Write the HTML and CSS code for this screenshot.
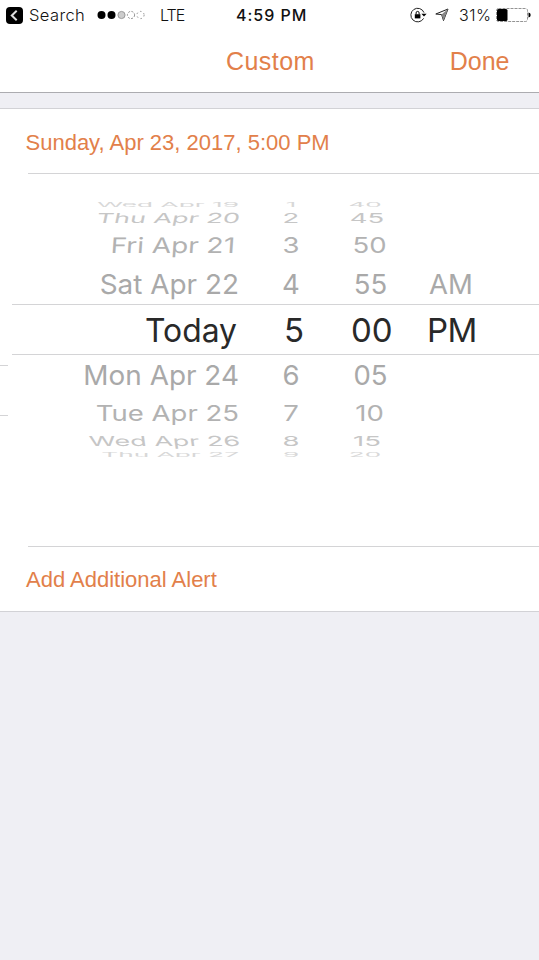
FILE: index.html
```html
<!DOCTYPE html>
<html lang="en">
<head>
<meta charset="utf-8">
<title>Custom Alert</title>
<link rel="stylesheet" href="styles.css">
</head>
<body>
<header class="top">
  <div class="status">
    <svg class="back" width="17" height="17" viewBox="0 0 17 17"><rect width="17" height="17" rx="4"/><path d="M10.7 3.8 5.8 8.5l4.9 4.7" fill="none" stroke="#ddd" stroke-width="2"/></svg>
    <span class="search">Search</span>
    <svg class="signal" width="48" height="10" viewBox="0 0 48 10"><circle cx="4.5" cy="5" r="4"/><circle cx="14.5" cy="5" r="4"/><circle cx="24.5" cy="5" r="3.6" fill="#ccc" stroke="#888" stroke-width=".8"/><g fill="none" stroke="#777" stroke-width=".8" stroke-dasharray="2 1.4"><circle cx="34" cy="5" r="3.6"/><circle cx="43.5" cy="5" r="3.6" stroke-dasharray="1.5 2.5"/></g></svg>
    <span class="carrier">LTE</span>
    <span class="clock">4:59 PM</span>
    <svg class="lock" width="17" height="16" viewBox="0 0 17 16"><path d="M13.6 11.4A6.8 6.8 0 1 1 14 5.6" fill="none" stroke="#222" stroke-width="1"/><path d="M11.4 6.8h5.2L14 9.6z"/><rect x="4.8" y="7.2" width="5.6" height="4.2"/><path d="M6.1 7.2V5.9a1.5 1.5 0 0 1 3 0v1.3" fill="none" stroke="#000" stroke-width="1"/></svg>
    <svg class="arrow" width="14" height="14" viewBox="0 0 14 14"><path d="M13 1 .8 6l5.8.6 1.9 6z" fill="none" stroke="#222" stroke-width="1"/><path d="M13 1 6.6 6.6l1.9 6z" fill="#888"/></svg>
    <span class="percent">31%</span>
    <svg class="battery" width="36" height="14" viewBox="0 0 36 14"><rect x=".5" y=".5" width="31" height="13" rx="2" fill="none" stroke="#777" stroke-width=".8" stroke-dasharray="3 1"/><rect x="1" y="1" width="10.5" height="12" rx="1.5"/><path d="M32.5 4.5q2.2.3 2.2 2.5t-2.2 2.5z"/></svg>
  </div>
  <nav class="nav"><h1>Custom</h1><a>Done</a></nav>
</header>
<main class="panel">
  <div class="date">Sunday, Apr 23, 2017, 5:00 PM</div>
  <div class="picker">
    <div class="wheel">
      <div class="row edge first"><span>Wed Apr 19</span><span>1</span><span>40</span></div>
      <div class="row far up"><span>Thu Apr 20</span><span>2</span><span>45</span></div>
      <div class="row mid up"><span>Fri Apr 21</span><span>3</span><span>50</span></div>
      <div class="row near above"><span>Sat Apr 22</span><span>4</span><span>55</span><span>AM</span></div>
      <div class="row current"><span>Today</span><span>5</span><span>00</span><span>PM</span></div>
      <div class="row near below"><span>Mon Apr 24</span><span>6</span><span>05</span></div>
      <div class="row mid down"><span>Tue Apr 25</span><span>7</span><span>10</span></div>
      <div class="row far down"><span>Wed Apr 26</span><span>8</span><span>15</span></div>
      <div class="row edge last"><span>Thu Apr 27</span><span>9</span><span>20</span></div>
    </div>
  </div>
  <div class="add">Add Additional Alert</div>
</main>
</body>
</html>
```
FILE: styles.css
```css
* { box-sizing: border-box; }
body { margin: 0; height: 960px; overflow: hidden; background: #efeff4; font-family: "Liberation Sans", Arial, sans-serif; color: #e2804a; }
.top { height: 93px; background: #fff; border-bottom: 1px solid #acacb0; }
.status { display: flex; align-items: center; height: 30px; padding-left: 6px; color: #111; font: 16.5px/30px Inter, sans-serif; white-space: nowrap; }
.status svg { flex: none; display: block; }
.search { width: 62px; margin-left: 6px; font-weight: 300; letter-spacing: .4px; }
.signal { margin-left: 6px; }
.carrier { width: 62px; margin-left: 15px; font-weight: 300; font-size: 16px; letter-spacing: -.9px; }
.clock { width: 160px; margin-left: 14px; font-weight: 450; font-size: 16px; letter-spacing: 1px; }
.lock { margin-left: 14px; }
.arrow { margin-left: 8px; }
.percent { width: 33px; margin-left: 10px; font-weight: 300; font-size: 16px; letter-spacing: .5px; }
.battery { margin-left: 4px; }
.nav { display: grid; grid-template-columns: 1fr auto; height: 62px; padding: 0 29.5px 0 226px; line-height: 62px; font-size: 25px; letter-spacing: .45px; }
.nav h1 { margin: 0; font: inherit; }
.nav a { letter-spacing: 0; }
.panel { margin-top: 15px; height: 504px; background: #fff; border: solid #d2d2d6; border-width: 1px 0; }
.date { height: 65px; margin-left: 28px; border-bottom: 1px solid #d4d4d6; font-size: 22px; line-height: 67px; text-indent: -2.5px; }
.picker { height: 372px; padding-top: 28px; background: linear-gradient(#d4d4d6, #d4d4d6) 0 191px / 8px 1px no-repeat, linear-gradient(#d4d4d6, #d4d4d6) 0 241px / 8px 1px no-repeat; }
.wheel { font-family: Inter, sans-serif; }
.row { display: grid; grid-template-columns: 239px 104px 56px 80px; height: var(--h); line-height: var(--h); white-space: nowrap; color: #a9a9a9; font-size: 27.5px; }
.row span { display: block; transform: translateY(var(--dy, 0px)) scaleY(var(--sy, 1)); }
.row span:nth-child(1) { text-align: right; transform-origin: right; transform: translateY(var(--dy, 0px)) scale(var(--sx, 1), var(--sy, 1)) skewX(var(--skew, 0deg)); }
.row span:nth-child(2), .row span:nth-child(3) { text-align: center; }
.row span:nth-child(4) { margin-left: 30px; }
.edge { --h: 5px; --sy: .22; overflow: hidden; color: #d8d8d8; grid-template-columns: 239px 104px 44px; font-size: 26px; }
.first { --sx: 1.01; }
.last { --sx: 1.01; }
.far { --h: 22px; --sy: .5; --sx: .98; color: #c6c6c6; grid-template-columns: 240px 102px 50px; }
.mid { --h: 33px; --sy: .775; color: #b2b2b2; grid-template-columns: 239px 104px 53px; }
.near { --h: 40px; --sx: 1.015; }
.above, .mid.down { margin-top: 2px; }
.above, .below { grid-template-columns: 239px 104px 55px 80px; }
.above span:nth-child(4) { margin-left: 31px; }
.mid.down { --dy: .5px; }
.far.up { --skew: -6deg; }
.far.down { --skew: 4deg; }
.mid.up { --sx: 1.015; --skew: -3deg; grid-template-columns: 235px 112px 45px; }
.current { --h: 49px; --sx: .965; --dy: 1px; height: 51px; margin-left: 12px; grid-template-columns: 225px 114px 39px 80px; border: solid #d4d4d6; border-width: 1px 0; color: #292929; font-size: 33px; font-weight: 370; }
.current span:nth-child(4) { margin-left: 37px; letter-spacing: -.5px; }
.add { height: 65px; margin-left: 28px; border-top: 1px solid #d4d4d6; text-indent: -2px; font-size: 22px; line-height: 65px; }
```
